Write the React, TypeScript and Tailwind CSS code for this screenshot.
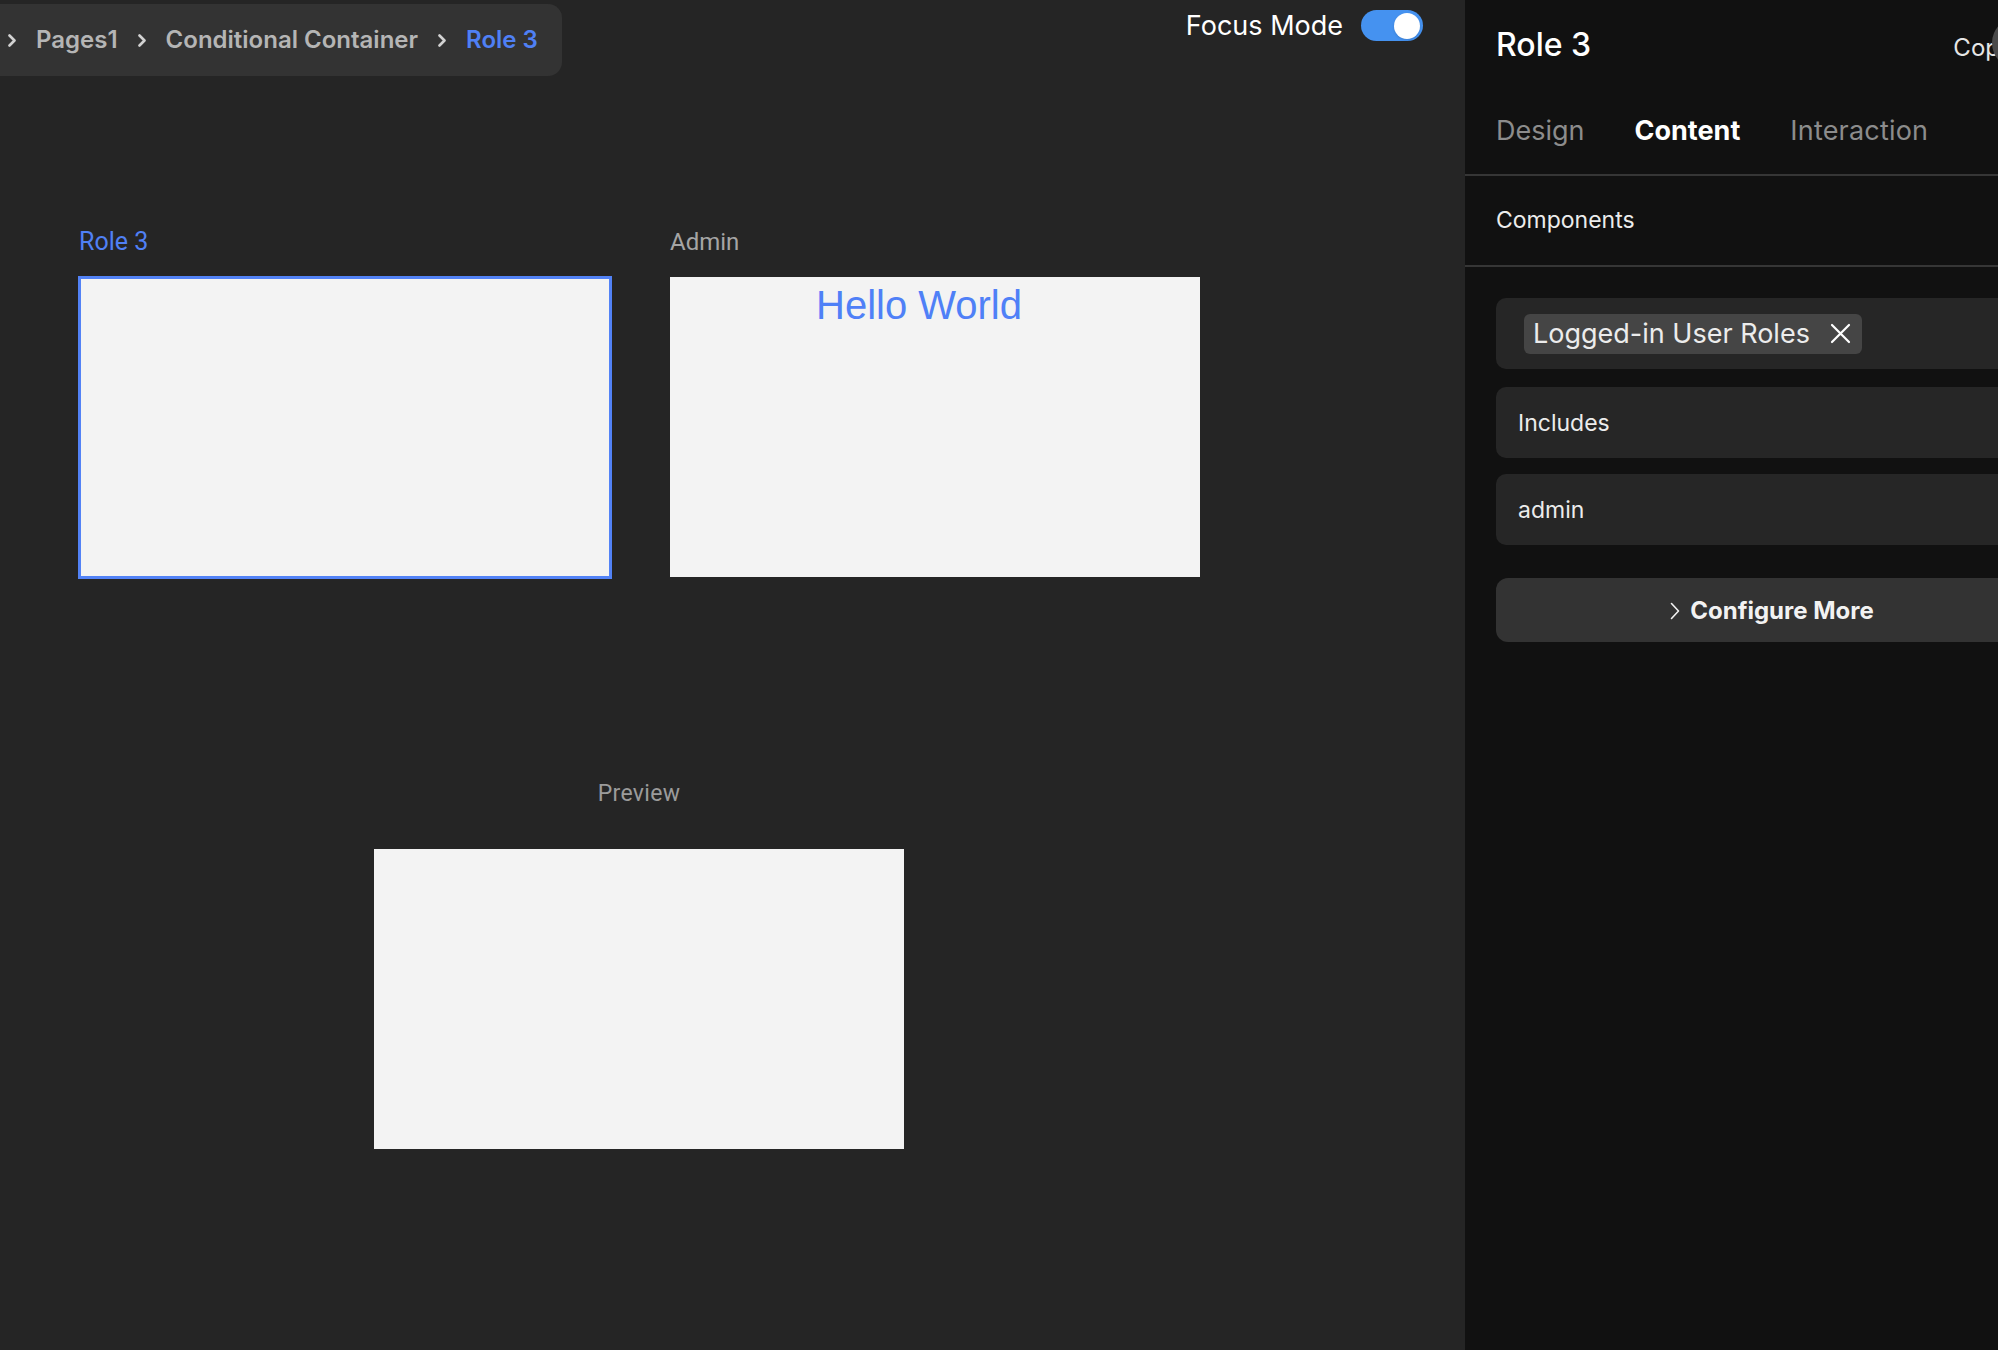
const CRUMBS = ["Pages1", "Conditional Container"];

function Chevron({ className = "" }: { className?: string }) {
    return (
        <svg width="10" height="13" viewBox="0 0 10 13" fill="none" className={className}>
            <path d="M2.5 1.5 L7.5 6.5 L2.5 11.5" stroke="currentColor" strokeWidth="2.6" strokeLinecap="round" strokeLinejoin="round" />
        </svg>
    );
}

function Breadcrumb() {
    return (
        <nav className="mt-[4px] -ml-[14px] flex h-[72px] items-center gap-[19px] rounded-[14px] bg-[#333333] pl-[21px] pr-[24px] text-[24px] font-semibold leading-none text-[#b5b5b5]">
            <Chevron className="text-[#d2d2d2]" />
            {CRUMBS.map((c) => (
                <div key={c} className="flex items-center gap-[19px]">
                    <span>{c}</span>
                    <Chevron className="text-[#d2d2d2]" />
                </div>
            ))}
            <span className="text-[#4f80f5]">Role 3</span>
        </nav>
    );
}

function FocusToggle() {
    return (
        <div className="mr-[42px] mt-[10px] flex items-center gap-[18px]">
            <span className="text-[27px] leading-[27px] text-white">Focus Mode</span>
            <div className="flex h-[31px] w-[62px] items-center justify-end rounded-full bg-[#4592f0] pr-[3px]">
                <div className="h-[26px] w-[26px] rounded-full bg-white shadow" />
            </div>
        </div>
    );
}

function Canvas() {
    return (
        <main className="flex w-[1465px] shrink-0 flex-col bg-[#252525]">
            <header className="flex items-start justify-between">
                <Breadcrumb />
                <FocusToggle />
            </header>

            <div className="ml-[78px] mt-[154px] flex w-[1122px] flex-col font-['Roboto',sans-serif]">
                {/* role columns */}
                <div className="grid grid-cols-[534px_530px] gap-x-[58px]">
                    <div className="flex flex-col">
                        <p className="pl-[1px] text-[25px] leading-[24px] text-[#5080f5]">Role 3</p>
                        <div className="mt-[22px] h-[303px] border-[3px] border-[#5282f6] bg-[#f3f3f3]" />
                    </div>
                    <div className="flex flex-col">
                        <p className="text-[24px] leading-[24px] text-[#a5a5a5]">Admin</p>
                        <div className="mt-[23px] h-[300px] bg-[#f3f3f3] pl-[146px] pt-[8px]">
                            <span className="font-['Liberation_Sans',Arial,sans-serif] text-[40px] leading-[40px] text-[#4f80f7]">
                                Hello World
                            </span>
                        </div>
                    </div>
                </div>

                {/* preview */}
                <div className="mt-[203px] flex flex-col items-center">
                    <p className="text-[23px] leading-[23px] tracking-[0.3px] text-[#9b9b9b]">Preview</p>
                    <div className="mt-[44px] h-[300px] w-[530px] bg-[#f3f3f3]" />
                </div>
            </div>
        </main>
    );
}

function Field({ children }: { children: React.ReactNode }) {
    return (
        <div className="flex h-[71px] items-center rounded-[10px] bg-[#262626] pl-[22px] pt-[2px] text-[23px] leading-none text-[#ececec]">
            {children}
        </div>
    );
}

function SidePanel() {
    return (
        <aside className="relative flex w-[607px] shrink-0 flex-col bg-[#111111]">
            <div className="flex items-baseline pl-[31px] pr-[59px] pt-[29px]">
                <h1 className="text-[32px] font-medium leading-[32px] text-white">Role 3</h1>
                <span className="ml-auto text-[24px] leading-[24px] text-[#e6e6e6]">Copy</span>
            </div>
            <div className="absolute left-[527px] top-[17px] h-[52px] w-[52px] rounded-full bg-[#4a4a4a]" />

            {/* tabs */}
            <div className="mt-[56px] flex gap-[50px] pl-[31px] text-[27px] leading-[27px] text-[#8c8c8c]">
                <span>Design</span>
                <span className="font-bold text-white">Content</span>
                <span className="tracking-[0.2px]">Interaction</span>
            </div>
            <div className="mt-[30px] h-[2px] bg-[#363636]" />

            <p className="mt-[33px] pl-[31px] text-[23px] leading-[23px] text-[#ececec]">Components</p>
            <div className="mt-[33px] h-[2px] bg-[#363636]" />

            <div className="mt-[31px] flex flex-col pl-[31px] pr-[24px]">
                <div className="flex h-[71px] items-center rounded-[10px] bg-[#262626] pl-[28px]">
                    <div className="flex h-[40px] items-center gap-[20px] rounded-[6px] bg-[#454545] pl-[9px] pr-[11px] text-[27px] leading-none text-[#ececec]">
                        <span>Logged-in User Roles</span>
                        <svg width="21" height="21" viewBox="0 0 21 21" fill="none" className="text-white">
                            <path d="M2 2 L19 19 M19 2 L2 19" stroke="currentColor" strokeWidth="2.2" strokeLinecap="round" />
                        </svg>
                    </div>
                </div>
                <div className="mt-[18px]">
                    <Field>Includes</Field>
                </div>
                <div className="mt-[16px]">
                    <Field>admin</Field>
                </div>
                <button className="mt-[33px] flex h-[64px] items-center justify-center gap-[10px] rounded-[12px] bg-[#333333] pt-[2px] text-[24px] font-bold leading-none text-[#f2f2f2]">
                    <svg width="10" height="18" viewBox="0 0 10 18" fill="none">
                        <path d="M1.5 1.5 L8.5 9 L1.5 16.5" stroke="currentColor" strokeWidth="1.6" strokeLinecap="round" strokeLinejoin="round" />
                    </svg>
                    <span>Configure More</span>
                </button>
            </div>
        </aside>
    );
}

export default function App() {
    return (
        <div className="flex h-[1350px] w-[1998px] overflow-hidden font-['Inter',sans-serif]">
            <Canvas />
            <SidePanel />
        </div>
    );
}
